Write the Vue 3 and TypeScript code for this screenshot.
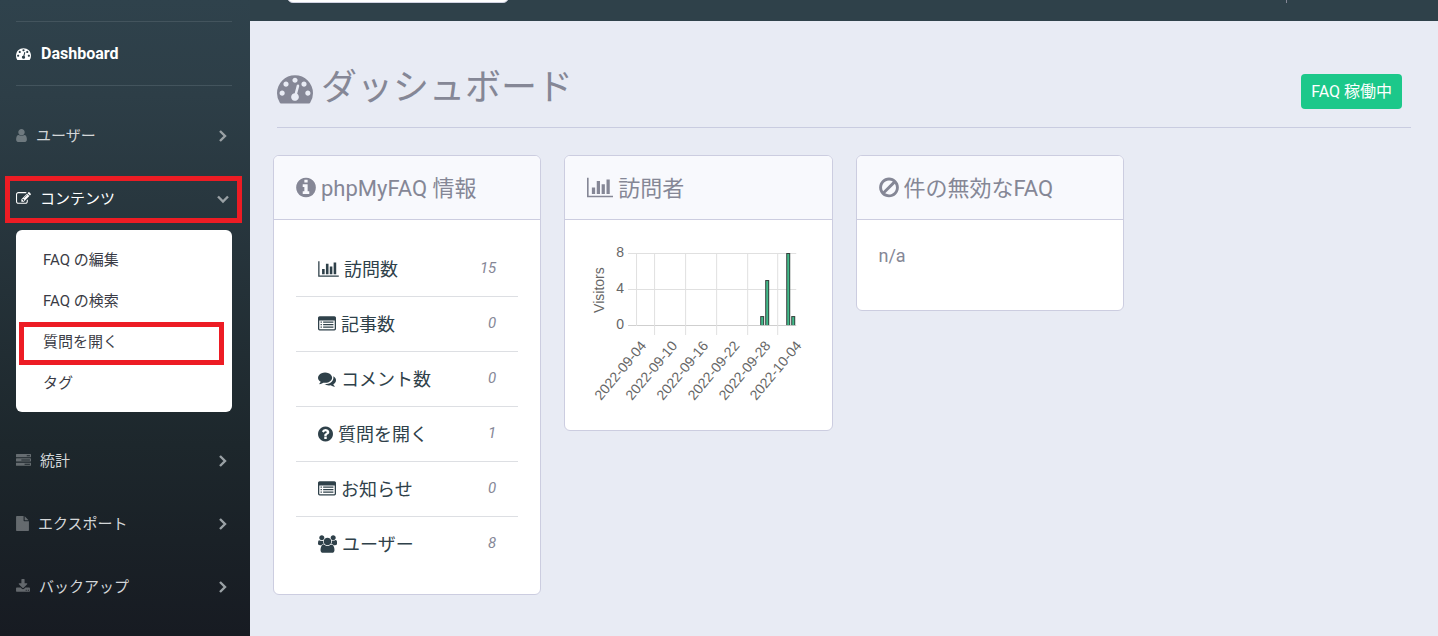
<script setup lang="ts">
interface Icon {
  box: string
  width: number
  d: string
}

const icons: Record<string, Icon> = {
  gauge: {
    box: '0 0 1792 1792',
    width: 1792,
    d: 'M384 1152q0-53-37.5-90.5t-90.5-37.5-90.5 37.5-37.5 90.5 37.5 90.5 90.5 37.5 90.5-37.5 37.5-90.5zm192-448q0-53-37.5-90.5t-90.5-37.5-90.5 37.5-37.5 90.5 37.5 90.5 90.5 37.5 90.5-37.5 37.5-90.5zm428 481l101-382q6-26-7.5-48.5t-38.5-29.5-48 6.5-30 39.5l-101 382q-60 5-107 43.5t-63 98.5q-20 77 20 146t117 89 146-20 89-117q16-60-6-117t-72-91zm660-33q0-53-37.5-90.5t-90.5-37.5-90.5 37.5-37.5 90.5 37.5 90.5 90.5 37.5 90.5-37.5 37.5-90.5zm-640-640q0-53-37.5-90.5t-90.5-37.5-90.5 37.5-37.5 90.5 37.5 90.5 90.5 37.5 90.5-37.5 37.5-90.5zm448 192q0-53-37.5-90.5t-90.5-37.5-90.5 37.5-37.5 90.5 37.5 90.5 90.5 37.5 90.5-37.5 37.5-90.5zm320 448q0 261-141 483-19 29-54 29h-1402q-35 0-54-29-141-221-141-483 0-182 71-348t191-286 286-191 348-71 348 71 286 191 191 286 71 348z',
  },
  user: {
    box: '256 0 1280 1792',
    width: 1280,
    d: 'M1536 1399q0 109-62.5 187t-150.5 78h-854q-88 0-150.5-78t-62.5-187q0-85 8.5-160.5t31.5-152 58.5-131 94-89 134.5-34.5q131 128 313 128t313-128q76 0 134.5 34.5t94 89 58.5 131 31.5 152 8.5 160.5zm-256-887q0 159-112.5 271.5t-271.5 112.5-271.5-112.5-112.5-271.5 112.5-271.5 271.5-112.5 271.5 112.5 112.5 271.5z',
  },
  edit: {
    box: '0 0 1792 1792',
    width: 1792,
    d: 'M888 1184l116-116-152-152-116 116v56h96v96h56zm440-720q-16-16-33 1l-350 350q-17 17-1 33t33-1l350-350q17-17 1-33zm80 594v190q0 119-84.5 203.5t-203.5 84.5h-832q-119 0-203.5-84.5t-84.5-203.5v-832q0-119 84.5-203.5t203.5-84.5h832q63 0 117 25 15 7 18 23 3 17-9 29l-49 49q-14 14-32 8-23-6-45-6h-832q-66 0-113 47t-47 113v832q0 66 47 113t113 47h832q66 0 113-47t47-113v-126q0-13 9-22l64-64q15-15 35-7t20 29zm-96-738l288 288-672 672h-288v-288zm444 132l-92 92-288-288 92-92q28-28 68-28t68 28l152 152q28 28 28 68t-28 68z',
  },
  tasks: {
    box: '0 0 1792 1792',
    width: 1792,
    d: 'M1024 1408h640v-128h-640v128zm-384-512h1024v-128h-1024v128zm640-512h384v-128h-384v128zm512 832v256q0 26-19 45t-45 19h-1664q-26 0-45-19t-19-45v-256q0-26 19-45t45-19h1664q26 0 45 19t19 45zm0-512v256q0 26-19 45t-45 19h-1664q-26 0-45-19t-19-45v-256q0-26 19-45t45-19h1664q26 0 45 19t19 45zm0-512v256q0 26-19 45t-45 19h-1664q-26 0-45-19t-19-45v-256q0-26 19-45t45-19h1664q26 0 45 19t19 45z',
  },
  file: {
    box: '128 0 1536 1792',
    width: 1536,
    d: 'M1152 512v-472q22 14 36 28l408 408q14 14 28 36h-472zm-128 32q0 40 28 68t68 28h544v1056q0 40-28 68t-68 28h-1344q-40 0-68-28t-28-68v-1600q0-40 28-68t68-28h800v544z',
  },
  download: {
    box: '64 0 1664 1792',
    width: 1664,
    d: 'M1344 1344q0-26-19-45t-45-19-45 19-19 45 19 45 45 19 45-19 19-45zm256 0q0-26-19-45t-45-19-45 19-19 45 19 45 45 19 45-19 19-45zm128-224v320q0 40-28 68t-68 28h-1472q-40 0-68-28t-28-68v-320q0-40 28-68t68-28h465l135 136q58 56 136 56t136-56l136-136h464q40 0 68 28t28 68zm-325-569q17 41-14 70l-448 448q-18 19-45 19t-45-19l-448-448q-31-29-14-70 17-39 59-39h256v-448q0-26 19-45t45-19h256q26 0 45 19t19 45v448h256q42 0 59 39z',
  },
  info: {
    box: '128 0 1536 1792',
    width: 1536,
    d: 'M1152 1376v-160q0-14-9-23t-23-9h-96v-512q0-14-9-23t-23-9h-320q-14 0-23 9t-9 23v160q0 14 9 23t23 9h96v320h-96q-14 0-23 9t-9 23v160q0 14 9 23t23 9h448q14 0 23-9t9-23zm-128-896v-160q0-14-9-23t-23-9h-192q-14 0-23 9t-9 23v160q0 14 9 23t23 9h192q14 0 23-9t9-23zm640 416q0 209-103 385.5t-279.5 279.5-385.5 103-385.5-103-279.5-279.5-103-385.5 103-385.5 279.5-279.5 385.5-103 385.5 103 279.5 279.5 103 385.5z',
  },
  chart: {
    box: '0 0 2048 1792',
    width: 2048,
    d: 'M640 896v512h-256v-512h256zm384-512v1024h-256v-1024h256zm1024 1152v128h-2048v-1536h128v1408h1920zm-640-896v768h-256v-768h256zm384-384v1152h-256v-1152h256z',
  },
  list: {
    box: '0 0 1792 1792',
    width: 1792,
    d: 'M160 128h1472q66 0 113 47t47 113v1088q0 66-47 113t-113 47h-1472q-66 0-113-47t-47-113v-1088q0-66 47-113t113-47zm-32 416v832q0 32 32 32h1472q32 0 32-32v-832zm128 96h128v128h-128zm256 0h1024v128h-1024zm-256 256h128v128h-128zm256 0h1024v128h-1024zm-256 256h128v128h-128zm256 0h1024v128h-1024z',
  },
  comments: {
    box: '0 0 1792 1792',
    width: 1792,
    d: 'M1408 768q0 139-94 257t-256.5 186.5-353.5 68.5q-86 0-176-16-124 88-278 128-36 9-86 16h-3q-11 0-20.5-8t-11.5-21q-1-3-1-6.5t.5-6.5 2-6l2.5-5 3.5-5.5 4-5 4.5-5 4-4.5q5-6 23-25t26-29.5 22.5-29 25-38.5 20.5-44q-124-72-195-177t-71-224q0-139 94-257t256.5-186.5 353.5-68.5 353.5 68.5 256.5 186.5 94 257zm384 256q0 120-71 224.5t-195 176.5q10 24 20.5 44t25 38.5 22.5 29 26 29.5 23 25q1 1 4 4.5t4.5 5 4 5 3.5 5.5l2.5 5 2 6 .5 6.5-1 6.5q-3 14-13 22t-22 7q-50-7-86-16-154-40-278-128-90 16-176 16-271 0-472-132 58 4 88 4 161 0 309-45t264-129q125-92 192-212t67-254q0-77-23-152 129 71 204 178t75 230z',
  },
  question: {
    box: '128 0 1536 1792',
    width: 1536,
    d: 'M1024 1376v-192q0-14-9-23t-23-9h-192q-14 0-23 9t-9 23v192q0 14 9 23t23 9h192q14 0 23-9t9-23zm256-672q0-88-55.5-163t-138.5-116-170-41q-243 0-371 213-15 24 8 42l132 100q7 6 19 6 16 0 25-12 53-68 86-92 34-24 86-24 48 0 85.5 26t37.5 59q0 38-20 61t-68 45q-63 28-115.5 86.5t-52.5 125.5v36q0 14 9 23t23 9h192q14 0 23-9t9-23q0-19 21.5-49.5t54.5-49.5q32-18 49-28.5t46-35 44.5-48 28-60.5 12.5-81zm384 192q0 209-103 385.5t-279.5 279.5-385.5 103-385.5-103-279.5-279.5-103-385.5 103-385.5 279.5-279.5 385.5-103 385.5 103 279.5 279.5 103 385.5z',
  },
  users: {
    box: '64 0 1920 1792',
    width: 1920,
    d: 'M657 896q-162 5-265 128h-134q-82 0-138-40.5t-56-118.5q0-353 124-353 6 0 43.5 21t97.5 42.5 119 21.5q67 0 133-23-5 37-5 66 0 159 93 287zm1071 637q0 120-73 189.5t-194 69.5h-874q-121 0-194-69.5t-73-189.5q0-53 3.5-103.5t14-109 26.5-108.5 43-97.5 62-81 85.5-53.5 111.5-20q10 0 43 21.5t73 48 107 48 135 21.5 135-21.5 107-48 73-48 43-21.5q61 0 111.5 20t85.5 53.5 62 81 43 97.5 26.5 108.5 14 109 3.5 103.5zm-1024-1277q0 106-75 181t-181 75-181-75-75-181 75-181 181-75 181 75 75 181zm704 384q0 159-112.5 271.5t-271.5 112.5-271.5-112.5-112.5-271.5 112.5-271.5 271.5-112.5 271.5 112.5 112.5 271.5zm576 225q0 78-56 118.5t-138 40.5h-134q-103-123-265-128 93-128 93-287 0-29-5-66 66 23 133 23 59 0 119-21.5t97.5-42.5 43.5-21q124 0 124 353zm-128-609q0 106-75 181t-181 75-181-75-75-181 75-181 181-75 181 75 75 181z',
  },
  ban: {
    box: '128 0 1536 1792',
    width: 1536,
    d: 'M1440 893q0-161-87-295l-754 753q137 89 297 89 111 0 211.5-43.5t173.5-116.5 116-174.5 43-212.5zm-999 299l755-754q-135-91-300-91-148 0-273 73t-198 199-73 274q0 162 89 299zm1223-299q0 157-61 300t-163.5 246-245 164-298.5 61-298.5-61-245-164-163.5-246-61-300 61-299.5 163.5-245.5 245-164 298.5-61 298.5 61 245 164 163.5 245.5 61 299.5z',
  },
}

const iconWidth = (name: string, size: number): number => Math.round((icons[name].width / 1792) * size)

const menu = [
  { icon: 'user', label: 'ユーザー', open: false },
  {
    icon: 'edit',
    label: 'コンテンツ',
    open: true,
    items: [
      { label: 'FAQ の編集', marked: false },
      { label: 'FAQ の検索', marked: false },
      { label: '質問を開く', marked: true },
      { label: 'タグ', marked: false },
    ],
  },
  { icon: 'tasks', label: '統計', open: false },
  { icon: 'file', label: 'エクスポート', open: false },
  { icon: 'download', label: 'バックアップ', open: false },
]

const stats = [
  { icon: 'chart', label: '訪問数', value: 15 },
  { icon: 'list', label: '記事数', value: 0 },
  { icon: 'comments', label: 'コメント数', value: 0 },
  { icon: 'question', label: '質問を開く', value: 1 },
  { icon: 'list', label: 'お知らせ', value: 0 },
  { icon: 'users', label: 'ユーザー', value: 8 },
]

const dates = ['2022-09-04', '2022-09-10', '2022-09-16', '2022-09-22', '2022-09-28', '2022-10-04']
const ticks = [8, 4, 0]
const gridX = [67, 98, 129, 160, 190]
const bars = [
  { x: 173, count: 1 },
  { x: 178, count: 5 },
  { x: 199, count: 8 },
  { x: 204, count: 1 },
]
const yOf = (count: number): number => 83 - count * 9
</script>

<template>
  <div class="page">
    <nav class="sidebar" aria-label="管理メニュー">
      <a class="dash" href="#">
        <svg class="icon" :viewBox="icons.gauge.box" width="15" height="15" aria-hidden="true"><path :d="icons.gauge.d" /></svg>
        <span>Dashboard</span>
      </a>
      <div v-for="entry in menu" :key="entry.label" class="group">
        <button type="button" class="toggle" :class="{ open: entry.open }" :aria-expanded="entry.open">
          <svg class="icon" :viewBox="icons[entry.icon].box" :width="iconWidth(entry.icon, 15)" height="15" aria-hidden="true">
            <path :d="icons[entry.icon].d" />
          </svg>
          <span>{{ entry.label }}</span>
          <svg class="angle" viewBox="0 0 12 12" width="12" height="12" aria-hidden="true">
            <path :d="entry.open ? 'M1 3.5L6 8.500L11 3.5' : 'M3 1L8 6L3 11'" />
          </svg>
        </button>
        <ul v-if="entry.items" class="submenu">
          <li v-for="item in entry.items" :key="item.label">
            <a href="#" :class="{ marked: item.marked }">{{ item.label }}</a>
          </li>
        </ul>
      </div>
    </nav>

    <div class="content">
      <header class="topbar">
        <input class="search" type="text" aria-label="検索" />
        <span class="divider"></span>
      </header>
      <main>
        <div class="heading">
          <h1>
            <svg class="icon" :viewBox="icons.gauge.box" width="36" height="36" aria-hidden="true"><path :d="icons.gauge.d" /></svg>
            <span>ダッシュボード</span>
          </h1>
          <button type="button" class="status">FAQ 稼働中</button>
        </div>

        <div class="cards">
          <section class="card">
            <h2>
              <svg class="icon" :viewBox="icons.info.box" width="20" height="23" aria-hidden="true"><path :d="icons.info.d" /></svg>
              <span>phpMyFAQ 情報</span>
            </h2>
            <ul class="stats">
              <li v-for="stat in stats" :key="stat.label">
                <a href="#">
                  <svg class="icon" :viewBox="icons[stat.icon].box" :width="iconWidth(stat.icon, 18)" height="18" aria-hidden="true">
                    <path :d="icons[stat.icon].d" fill-rule="evenodd" />
                  </svg>
                  <span>{{ stat.label }}</span>
                </a>
                <em>{{ stat.value }}</em>
              </li>
            </ul>
          </section>

          <section class="card">
            <h2>
              <svg class="icon" :viewBox="icons.chart.box" width="26" height="23" aria-hidden="true"><path :d="icons.chart.d" /></svg>
              <span>訪問者</span>
            </h2>
            <div class="body">
              <svg class="plot" viewBox="0 0 222 166" role="img" aria-label="Visitors">
                <g class="grid">
                  <path v-for="t in ticks" :key="t" :d="`M41 ${yOf(t)}H209v1H41z`" :class="{ axis: t === 0 }" />
                  <path d="M49 11h1v73h-1z" />
                  <path v-for="x in gridX" :key="x" :d="`M${x} 11h1v82h-1z`" />
                </g>
                <g v-for="bar in bars" :key="bar.x">
                  <rect class="edge" :x="bar.x" :y="yOf(bar.count)" width="4" :height="bar.count * 9" />
                  <rect class="fill" :x="bar.x + 1" :y="yOf(bar.count) + 1" width="2" :height="bar.count * 9 - 1" />
                </g>
                <text v-for="t in ticks" :key="t" class="right" x="37" :y="yOf(t) + 4">{{ t }}</text>
                <text class="middle" transform="translate(17 48) rotate(-90)">Visitors</text>
                <text
                  v-for="(date, i) in dates"
                  :key="date"
                  class="right"
                  :transform="`translate(${60 + i * 31} 104) rotate(-50)`"
                >{{ date }}</text>
              </svg>
            </div>
          </section>

          <section class="card">
            <h2>
              <svg class="icon" :viewBox="icons.ban.box" width="20" height="23" aria-hidden="true"><path :d="icons.ban.d" /></svg>
              <span>件の無効なFAQ</span>
            </h2>
            <div class="body"><p>n/a</p></div>
          </section>
        </div>
      </main>
    </div>
  </div>
</template>

<style>
body {
  margin: 0;
  background: #e8ebf4;
}
</style>

<style scoped>
.page {
  display: flex;
  min-height: 100vh;
  font-family: Roboto, "Noto Sans CJK JP", sans-serif;
  font-size: 15px;
  color: #858796;
  background: #e8ebf4;
}

ul,
h1,
h2,
p {
  margin: 0;
  padding: 0;
  list-style: none;
  font-weight: 400;
}

a {
  color: inherit;
  text-decoration: none;
}

button {
  font: inherit;
  border: 0;
  cursor: pointer;
}

.icon {
  flex: none;
  fill: currentColor;
}

.sidebar {
  box-sizing: border-box;
  flex: none;
  width: 250px;
  padding-top: 21px;
  background: linear-gradient(180deg, #2f424c 0%, #2d3e47 15%, #1d272c 70%, #171b22 100%);
}

.dash {
  display: flex;
  align-items: center;
  gap: 10px;
  height: 63px;
  margin: 0 18px 18px 16px;
  border-top: 1px solid #43545d;
  border-bottom: 1px solid #43545d;
  color: #fff;
  font-size: 16px;
  font-weight: 700;
}

.toggle {
  position: relative;
  display: flex;
  align-items: center;
  gap: 9px;
  width: 100%;
  height: 63px;
  padding: 0 21px 0 16px;
  background: none;
  color: #d3d6d8;
}

.toggle span {
  padding-bottom: 2px;
}

.toggle .icon {
  opacity: 0.4;
}

.toggle.open {
  color: #fff;
}

.toggle.open .icon {
  opacity: 1;
}

.toggle.open::after {
  content: "";
  position: absolute;
  inset: 9px 8px 7px 5px;
  border: 5px solid #ed1c24;
}

.angle {
  margin-left: auto;
  fill: none;
  stroke: #9aa1a5;
  stroke-width: 2.4;
}

.submenu {
  margin: 0 18px 17px 16px;
  padding: 10px 0 8px;
  border-radius: 6px;
  background: #fff;
  color: #3a3b45;
}

.submenu a {
  position: relative;
  display: block;
  padding-left: 27px;
  line-height: 41px;
}

.marked::after {
  content: "";
  position: absolute;
  inset: 0 8px -2px 3px;
  border: 5px solid #ed1c24;
}

.content {
  flex: 1;
  min-width: 0;
}

.topbar {
  display: flex;
  align-items: flex-start;
  height: 21px;
  overflow: hidden;
  background: #2f414a;
}

.search {
  box-sizing: border-box;
  width: 222px;
  height: 38px;
  margin: -35px 0 0 37px;
  border: 1px solid #d1d3e2;
  border-radius: 6px;
  background: #fff;
}

.divider {
  width: 1px;
  height: 3px;
  margin: 0 151px 0 auto;
  background: #858796;
}

main {
  padding: 0 23px 41px;
}

.heading {
  display: flex;
  align-items: center;
  justify-content: space-between;
  height: 106px;
  margin: 0 4px 27px;
  border-bottom: 1px solid #c9cce0;
}

h1 {
  display: flex;
  align-items: center;
  gap: 8px;
  padding-top: 28px;
  font-size: 36px;
  line-height: 54px;
}

.status {
  height: 35px;
  margin: 35px 9px 0 0;
  padding: 0 10px 3px;
  border-radius: 4px;
  background: #1cc88a;
  color: #fff;
  font-size: 16px;
}

.cards {
  display: grid;
  grid-template-columns: repeat(4, 1fr);
  align-items: start;
  gap: 23px;
}

.card {
  overflow: hidden;
  border: 1px solid #cccde0;
  border-radius: 6px;
  background: #fff;
}

h2 {
  display: flex;
  align-items: center;
  gap: 5px;
  height: 63px;
  padding: 0 22px;
  border-bottom: 1px solid #cccde0;
  background: #f8f9fd;
  font-size: 22px;
}

h2 span {
  padding-bottom: 4px;
}

.stats {
  padding: 22px;
}

.stats li {
  display: flex;
  align-items: center;
  justify-content: space-between;
  height: 51px;
  padding: 0 22px 3px;
  border-bottom: 1px solid #dddfe3;
}

.stats li:last-child {
  border-bottom-color: transparent;
}

.stats a {
  display: flex;
  align-items: center;
  gap: 5px;
  color: #2f414a;
  font-size: 18px;
}

.stats .icon {
  margin-top: 3px;
}

.stats em {
  font-size: 15px;
}

.body {
  padding: 22px;
}

.body p {
  height: 46px;
  line-height: 28px;
  font-size: 18px;
}

.plot {
  display: block;
  width: 100%;
  font-family: "Liberation Sans", Arial, sans-serif;
  font-size: 14px;
  fill: #666;
}

.grid {
  fill: #e0e0e0;
}

.axis {
  fill: #cfcfcf;
}

.edge {
  fill: #333f3b;
}

.fill {
  fill: #42ba8a;
}

.right {
  text-anchor: end;
}

.middle {
  text-anchor: middle;
}
</style>
